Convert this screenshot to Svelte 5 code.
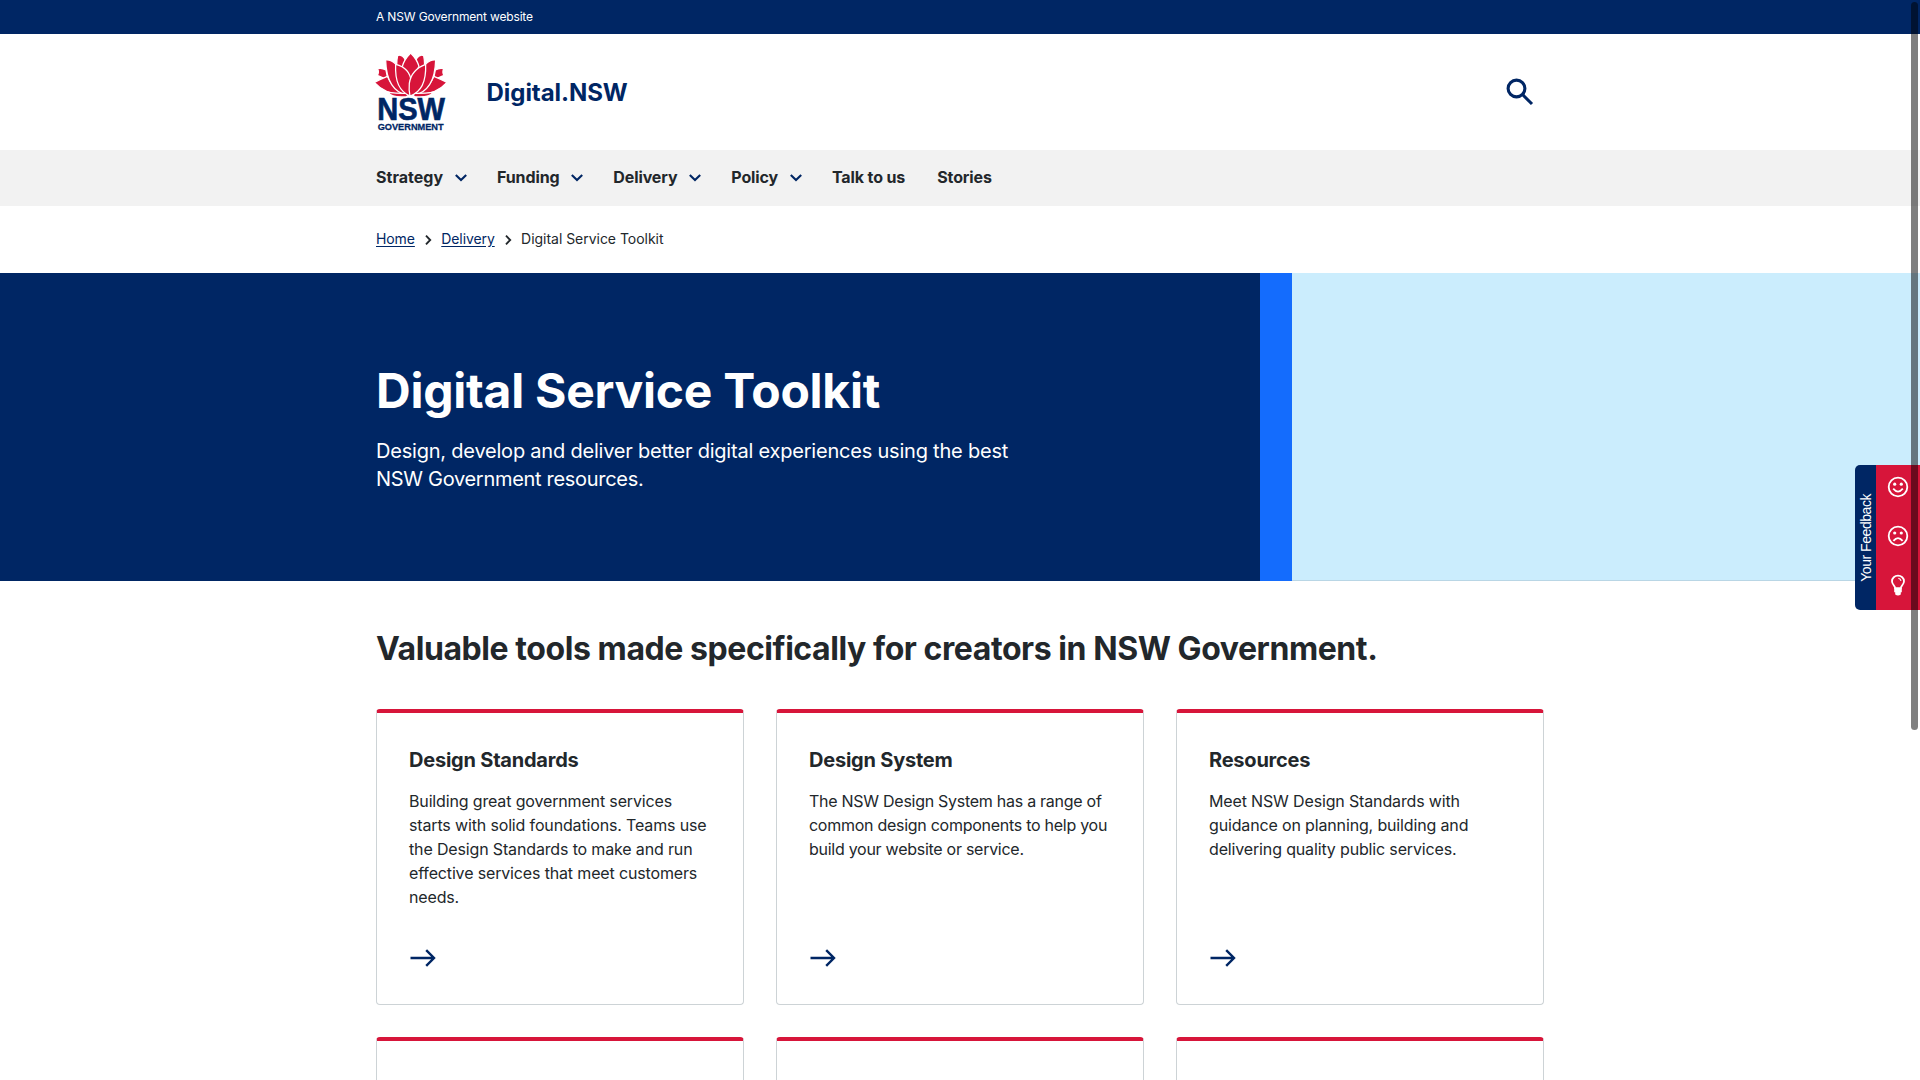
<script>
  const nav = [
    { label: 'Strategy', menu: true },
    { label: 'Funding', menu: true },
    { label: 'Delivery', menu: true },
    { label: 'Policy', menu: true },
    { label: 'Talk to us', menu: false },
    { label: 'Stories', menu: false }
  ];
  const cards = [
    {
      title: 'Design Standards',
      lines: [
        'Building great government services',
        'starts with solid foundations. Teams use',
        'the Design Standards to make and run',
        'effective services that meet customers',
        'needs.'
      ]
    },
    {
      title: 'Design System',
      tight: true,
      lines: [
        'The NSW Design System has a range of',
        'common design components to help you',
        'build your website or service.'
      ]
    },
    {
      title: 'Resources',
      lines: [
        'Meet NSW Design Standards with',
        'guidance on planning, building and',
        'delivering quality public services.'
      ]
    }
  ];
</script>

{#snippet halfFlower()}
  <path d="M96 167Q108 161 118 177L113 206L93 197Q93 180 96 167Z" />
  <path d="M36 206Q49 203 61 210L67 240L35 226Q41 217 36 206Z" />
  <path d="M26 247Q46 237 65 229Q80 265 116 282Q60 285 26 247Z" />
  <path d="M60 180Q75 178 90 192L128 287Q62 274 60 180Z" />
  <path d="M67 277Q98 281 125 280Q132 286 122 290Q80 294 67 277Z" />
{/snippet}

<div class="page">
  <div class="topbar"><div class="wrap">A NSW Government website</div></div>

  <header class="wrap masthead">
    <svg class="logo" viewBox="28 159 214 234" aria-label="NSW Government">
      <g class="petals">
        {@render halfFlower()}
        <g transform="translate(270 0) scale(-1 1)">{@render halfFlower()}</g>
        <path d="M135 159Q154 178 160 199Q150 223 135 241Q120 223 110 199Q116 178 135 159Z" />
        <path d="M90 193Q133 203 137 246Q139 270 134 288Q86 270 90 193Z" />
        <path d="M180 193Q137 209 131 250Q129 272 133 288Q183 272 180 193Z" />
      </g>
      <text class="nsw" x="35" y="361" textLength="203" lengthAdjust="spacingAndGlyphs">NSW</text>
      <text class="gov" x="36" y="389.5" textLength="198" lengthAdjust="spacingAndGlyphs">GOVERNMENT</text>
    </svg>
    <div class="site">Digital.NSW</div>
    <svg class="search" viewBox="0 0 28 28"><circle cx="10.5" cy="10.5" r="8.4" /><path d="M17 17L26 26" /></svg>
  </header>

  <nav>
    <div class="wrap navrow">
      {#each nav as item}
        <a href="#top" class:menu={item.menu}>
          {item.label}
          {#if item.menu}<svg viewBox="0 0 24 24"><path d="M6.8 9.9L12 15.1L17.2 9.9" /></svg>{/if}
        </a>
      {/each}
    </div>
  </nav>

  <div class="wrap crumbs">
    <a href="#top">Home</a>
    <svg viewBox="0 0 8 12"><path d="M2 1.7L6.2 6L2 10.3" /></svg>
    <a href="#top">Delivery</a>
    <svg viewBox="0 0 8 12"><path d="M2 1.7L6.2 6L2 10.3" /></svg>
    <span>Digital Service Toolkit</span>
  </div>

  <section class="hero">
    <div class="intro">
      <h1>Digital Service Toolkit</h1>
      <p>Design, develop and deliver better digital experiences using the best<br /><span>NSW Government resources.</span></p>
    </div>
    <div class="stripe"></div>
    <div class="pale"></div>
  </section>

  <main class="wrap">
    <h2>Valuable tools made specifically for creators in NSW Government.</h2>
    <div class="cards">
      {#each cards as card}
        <article class:tight={card.tight}>
          <h3>{card.title}</h3>
          <p>{#each card.lines as line}<span>{line}</span>{/each}</p>
          <svg viewBox="0 0 28 20"><path d="M1.5 10H25M17.2 2.2L25 10L17.2 17.8" /></svg>
        </article>
      {/each}
      {#each cards as _}
        <article></article>
      {/each}
    </div>
  </main>

  <aside class="feedback">
    <div class="label"><span>Your Feedback</span></div>
    <div class="faces">
      <svg viewBox="0 0 22 22">
        <circle class="line" cx="11" cy="11" r="9.3" />
        <circle cx="7.7" cy="8.2" r="1.6" /><circle cx="14.3" cy="8.2" r="1.6" />
        <path class="line" d="M6.2 12.7Q11 18.4 15.8 12.7" />
      </svg>
      <svg viewBox="0 0 22 22">
        <circle class="line" cx="11" cy="11" r="9.3" />
        <circle cx="7.7" cy="8" r="1.6" /><circle cx="14.3" cy="8" r="1.6" />
        <path class="line" d="M6.4 15.9Q11 10.2 15.6 15.9" />
      </svg>
      <svg viewBox="0 0 22 22">
        <path class="line" d="M8.2 14.2C8 11.6 5 10.6 5 7.2A6 5.6 0 0 1 17 7.2C17 10.6 14 11.6 13.8 14.2Z" />
        <path d="M7.2 14H14.8V18.2H13.8V20.4Q11 22.4 8.2 20.4V18.2H7.2Z" />
        <path class="thin" d="M11.3 4.2Q13.6 4.6 14 6.8" />
      </svg>
    </div>
  </aside>
  <div class="scrollbar"></div>
</div>

<style>
  :global(body) { background: #fff; }
  .page {
    height: 1080px;
    overflow: hidden;
    color: #22272b;
    font-family: Inter, 'Liberation Sans', sans-serif;
  }
  h1, h2, h3, p { margin: 0; }
  h1, h2, h3 { font-weight: 700; }
  a { color: inherit; }
  svg { display: block; flex: none; }
  .wrap { width: 1168px; margin: 0 auto; }

  .topbar { background: #002664; color: #fff; font-size: 12px; line-height: 34px; letter-spacing: -0.16px; }

  .masthead { height: 116px; display: flex; align-items: center; }
  .logo { width: 71.3px; height: 78px; margin: 0 0 1px -0.7px; overflow: visible; }
  .petals { fill: #d7153a; stroke: #fff; stroke-width: 3.8; stroke-linejoin: round; }
  .nsw, .gov { fill: #002664; font-family: 'Liberation Sans', sans-serif; font-weight: 700; }
  .nsw { font-size: 92px; stroke: #002664; stroke-width: 2; }
  .gov { font-size: 29px; stroke: #002664; stroke-width: 0.8; }
  .site { margin-left: 40px; color: #002664; font-size: 24px; font-weight: 700; letter-spacing: -0.07px; }
  .search { width: 28px; height: 28px; margin: 0 10px 0 auto; fill: none; stroke: #002664; stroke-width: 3.1; }

  nav { background: #f2f2f2; }
  .navrow { height: 56px; box-sizing: border-box; padding-bottom: 2px; display: flex; align-items: center; }
  .navrow a {
    display: flex;
    align-items: center;
    gap: 6px;
    margin-right: 32px;
    font-size: 16px;
    font-weight: 700;
    letter-spacing: -0.12px;
    text-decoration: none;
  }
  .navrow a.menu { margin-right: 23.9px; }
  .navrow a:first-child { letter-spacing: 0.03px; }
  .navrow svg { width: 24px; height: 24px; fill: none; stroke: #002664; stroke-width: 2.1; }

  .crumbs { height: 67px; box-sizing: border-box; padding-bottom: 2px; display: flex; align-items: center; font-size: 14px; letter-spacing: -0.09px; }
  .crumbs span { letter-spacing: -0.03px; }
  .crumbs a { color: #002664; text-underline-offset: 2px; }
  .crumbs svg { width: 8px; height: 12px; margin: 3px 9.2px 0; fill: none; stroke: #22272b; stroke-width: 1.9; }

  .hero { height: 308px; display: flex; background: #002664; color: #fff; }
  .intro { box-sizing: border-box; width: 1260px; padding: 88px 0 0 376px; flex: none; }
  h1 { font-size: 48px; line-height: 60px; letter-spacing: -0.26px; }
  .intro p { margin-top: 16px; font-size: 20px; line-height: 28px; letter-spacing: -0.21px; white-space: nowrap; }
  .intro p span { letter-spacing: -0.3px; }
  .stripe { width: 32px; background: #146cfd; }
  .pale { flex: 1; background: #cbedfd; box-shadow: inset 0 -1px #b9d6e5; }

  main { padding-top: 48px; }
  h2 { font-size: 32px; line-height: 40px; letter-spacing: -0.43px; white-space: nowrap; }
  .cards { display: grid; grid-template-columns: repeat(3, 368px); grid-auto-rows: 296px; gap: 32px; margin-top: 40px; }
  article {
    box-sizing: border-box;
    display: flex;
    flex-direction: column;
    padding: 35px 32px 36px;
    border: 1px solid #cdd3d6;
    border-top: 4px solid #d7153a;
    border-radius: 4px;
  }
  h3 { font-size: 20px; line-height: 25px; letter-spacing: -0.22px; }
  article p { margin-top: 16px; font-size: 16px; line-height: 24px; letter-spacing: -0.15px; white-space: nowrap; }
  article.tight p { letter-spacing: -0.27px; }
  article p span { display: block; }
  article svg { width: 28px; height: 20px; margin-top: auto; fill: none; stroke: #002664; stroke-width: 2.4; }

  .feedback { position: fixed; left: 1855px; top: 465px; width: 65px; height: 145px; display: flex; }
  .label {
    width: 21px;
    display: flex;
    align-items: center;
    justify-content: center;
    background: #002664;
    color: #fff;
    border-radius: 5px 0 0 5px;
  }
  .label span { writing-mode: vertical-rl; transform: rotate(180deg); font: 14px 'Liberation Sans', sans-serif; letter-spacing: -0.45px; white-space: nowrap; }
  .faces { flex: 1; display: flex; flex-direction: column; align-items: center; gap: 27px; padding-top: 10.5px; background: #d7153a; }
  .faces svg { width: 22px; height: 22px; fill: #fff; }
  .faces .line { fill: none; stroke: #fff; stroke-width: 1.8; }
  .faces .thin { fill: none; stroke: #fff; stroke-width: 1.1; }
  .scrollbar { position: fixed; left: 1911px; top: 2px; width: 7px; height: 728px; border-radius: 4px; background: rgba(0, 0, 0, 0.5); }
</style>
